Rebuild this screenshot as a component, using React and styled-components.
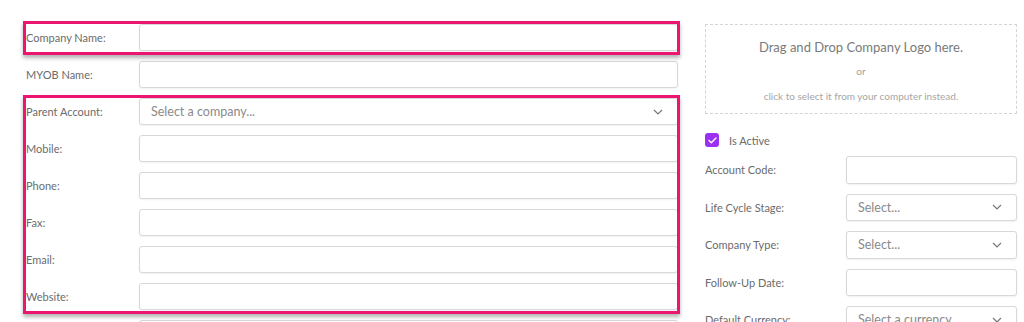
import React from 'react';
import styled, { createGlobalStyle } from 'styled-components';

const GlobalStyle = createGlobalStyle`
  html, body {
    margin: 0;
    padding: 0;
    background: #fff;
    font-family: Lato, 'Open Sans', sans-serif;
    overflow: hidden;
  }
`;

const leftRows = [
  { label: 'Company Name:', group: 1 },
  { label: 'MYOB Name:' },
  { label: 'Parent Account:', group: 2, select: 'Select a company...' },
  { label: 'Mobile:', group: 2 },
  { label: 'Phone:', group: 2 },
  { label: 'Fax:', group: 2 },
  { label: 'Email:', group: 2 },
  { label: 'Website:', group: 2 },
];

const rightRows = [
  { label: 'Account Code:' },
  { label: 'Life Cycle Stage:', select: 'Select...' },
  { label: 'Company Type:', select: 'Select...' },
  { label: 'Follow-Up Date:' },
  { label: 'Default Currency:', select: 'Select a currency...' },
];

function Chevron() {
  return (
    <ChevronIcon viewBox="0 0 10 6" width="10" height="6">
      <path d="M1 1l4 4 4-4" fill="none" stroke="#777" strokeWidth="1.2" />
    </ChevronIcon>
  );
}

function Field({ label, select, side }) {
  return (
    <Row side={side}>
      <Label side={side}>{label}</Label>
      <Input>
        {select && (
          <>
            <Placeholder>{select}</Placeholder>
            <Chevron />
          </>
        )}
      </Input>
    </Row>
  );
}

function App() {
  const first = leftRows.filter((r) => r.group === 1);
  const second = leftRows.filter((r) => r.group === 2);
  return (
    <>
      <GlobalStyle />
      <Page>
        <LeftColumn>
          <Highlight>
            {first.map((r) => (
              <Field key={r.label} {...r} />
            ))}
          </Highlight>
          <Field label="MYOB Name:" />
          <Highlight>
            {second.map((r) => (
              <Field key={r.label} {...r} />
            ))}
          </Highlight>
          <Field label="" />
        </LeftColumn>
        <RightColumn>
          <DropZone>
            <DropTitle>Drag and Drop Company Logo here.</DropTitle>
            <DropOr>or</DropOr>
            <DropHint>click to select it from your computer instead.</DropHint>
          </DropZone>
          <CheckRow>
            <CheckBox>
              <svg viewBox="0 0 10 8" width="9" height="7">
                <path
                  d="M1 4l2.6 2.6L9 1.2"
                  fill="none"
                  stroke="#fff"
                  strokeWidth="1.6"
                  strokeLinecap="round"
                  strokeLinejoin="round"
                />
              </svg>
            </CheckBox>
            <CheckLabel>Is Active</CheckLabel>
          </CheckRow>
          <RightFields>
            {rightRows.map((r) => (
              <Field key={r.label} side="right" {...r} />
            ))}
          </RightFields>
        </RightColumn>
      </Page>
    </>
  );
}

export default App;

const Page = styled.div`
  display: flex;
  align-items: flex-start;
  gap: 27px;
  padding: 24px 0 0 24px;
  height: 322px;
  box-sizing: border-box;
  overflow: hidden;
`;

const LeftColumn = styled.div`
  width: 654px;
  flex-shrink: 0;
  display: flex;
  flex-direction: column;
  gap: 10px;
`;

const Highlight = styled.div`
  position: relative;
  display: flex;
  flex-direction: column;
  gap: 10px;
  flex-shrink: 0;
  &::after {
    content: '';
    position: absolute;
    top: -3px;
    bottom: -4px;
    left: -1px;
    right: -2px;
    border: 3px solid #ea1670;
    box-shadow: 0 3px 4px rgba(0, 0, 0, 0.3);
    pointer-events: none;
  }
`;

const Row = styled.div`
  display: flex;
  align-items: center;
  height: ${(p) => (p.side === 'right' ? '27.5px' : '27px')};
  flex-shrink: 0;
`;

const Label = styled.div`
  width: ${(p) => (p.side === 'right' ? '141px' : '113px')};
  padding-left: ${(p) => (p.side === 'right' ? '0' : '2px')};
  flex-shrink: 0;
  font-size: 11px;
  color: #6b6b6b;
  white-space: nowrap;
`;

const Input = styled.div`
  flex: 1;
  height: 100%;
  box-sizing: border-box;
  border: 1px solid #d8d8d8;
  border-radius: 3px;
  background: #fff;
  box-shadow: 0 1px 2px rgba(0, 0, 0, 0.06);
  display: flex;
  align-items: center;
  justify-content: space-between;
  padding: 0 14px 0 11px;
`;

const Placeholder = styled.span`
  font-size: 12.5px;
  color: #8a8a8a;
`;

const ChevronIcon = styled.svg`
  display: block;
`;

const RightColumn = styled.div`
  width: 312px;
  flex-shrink: 0;
  display: flex;
  flex-direction: column;
`;

const DropZone = styled.div`
  height: 90px;
  flex-shrink: 0;
  box-sizing: border-box;
  border: 1.5px dashed #d4d4d4;
  display: flex;
  flex-direction: column;
  align-items: center;
  padding-top: 13px;
`;

const DropTitle = styled.div`
  font-size: 13px;
  color: #7a7a7a;
  line-height: 18px;
`;

const DropOr = styled.div`
  font-size: 10px;
  color: #9e9e9e;
  margin-top: 8px;
  line-height: 14px;
`;

const DropHint = styled.div`
  font-size: 10px;
  color: #a6a6a6;
  margin-top: 11px;
  line-height: 14px;
`;

const CheckRow = styled.div`
  display: flex;
  align-items: center;
  gap: 10px;
  margin-top: 19px;
  height: 14px;
  flex-shrink: 0;
`;

const CheckBox = styled.div`
  width: 14px;
  height: 14px;
  border-radius: 3px;
  background: #9b2ff2;
  display: flex;
  align-items: center;
  justify-content: center;
`;

const CheckLabel = styled.span`
  font-size: 11px;
  color: #6b6b6b;
`;

const RightFields = styled.div`
  display: flex;
  flex-direction: column;
  gap: 10px;
  margin-top: 9px;
  flex-shrink: 0;
`;
